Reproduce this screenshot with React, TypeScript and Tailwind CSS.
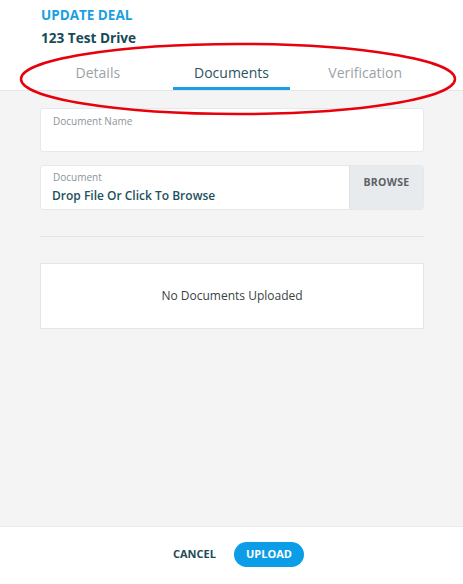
import React from 'react';

const tabs = ['Details', 'Documents', 'Verification'];

export default function App() {
  return (
    <div
      className="relative w-[463px] h-[584px] flex flex-col bg-[#f4f4f4] overflow-hidden"
      style={{ fontFamily: '"Open Sans", "Noto Sans", sans-serif' }}
    >
      {/* Header */}
      <div className="bg-white border-b border-[#e6e6e6] shrink-0">
        <div className="px-[41px] pt-[6px]">
          <div className="text-[13.5px] font-bold text-[#1a9fe3] leading-[18px]">UPDATE DEAL</div>
          <div className="text-[13.6px] font-bold text-[#174a58] leading-[20px] mt-[4px]">123 Test Drive</div>
        </div>
        <div className="flex px-[31px] mt-[15px]">
          {tabs.map((t) => {
            const active = t === 'Documents';
            return (
              <div key={t} className="flex-1 flex flex-col items-center">
                <span className={'text-[14px] leading-[20px] ' + (active ? 'text-[#2b5462]' : 'text-[#9aa3a8]')}>{t}</span>
                <div className={'h-[3px] w-[117px] mt-[4px] ' + (active ? 'bg-[#1a9fe3]' : 'bg-transparent')} />
              </div>
            );
          })}
        </div>
      </div>

      {/* Body */}
      <div className="flex-1 pl-[40px] pr-[39px] pt-[17px]">
        <div className="h-[44px] bg-white border border-[#e6e8eb] rounded-[3px] px-[12px] pt-[5px]">
          <div className="text-[10px] text-[#8c959a] leading-[14px]">Document Name</div>
        </div>

        <div className="h-[45px] mt-[13px] bg-white border border-[#e6e8eb] rounded-[3px] flex overflow-hidden">
          <div className="flex-1 pl-[11px] pt-[4px]">
            <div className="text-[10px] text-[#8c959a] leading-[14px] pl-[1px]">Document</div>
            <div className="text-[12px] font-semibold text-[#1d5060] leading-[18px] mt-[3px]">Drop File Or Click To Browse</div>
          </div>
          <div className="w-[74px] bg-[#e8ebee] border-l border-[#dde1e5] flex justify-center pt-[9px]">
            <span className="text-[10.5px] font-bold text-[#5b6166] tracking-[0.3px]">BROWSE</span>
          </div>
        </div>

        <div className="h-px bg-[#e3e5e7] mt-[26px]" />

        <div className="h-[66px] mt-[26px] bg-white border border-[#e3e5e8] flex items-center justify-center">
          <span className="text-[12px] text-[#3a3f44]">No Documents Uploaded</span>
        </div>
      </div>

      {/* Footer */}
      <div className="h-[58px] shrink-0 bg-white border-t border-[#ebebeb] flex items-center justify-center gap-[21px] pl-[14px] pb-[2px]">
        <span className="text-[11px] font-bold text-[#1d4a57] w-[40px] text-center">CANCEL</span>
        <button className="h-[25px] w-[70px] rounded-full bg-[#0b9de8] text-white text-[11px] font-bold">UPLOAD</button>
      </div>

      {/* Annotation ellipse */}
      <svg className="absolute left-0 top-0 pointer-events-none" width="463" height="584">
        <ellipse cx="238" cy="79" rx="217" ry="35" fill="none" stroke="#e8000b" strokeWidth="2.5" />
      </svg>
    </div>
  );
}
